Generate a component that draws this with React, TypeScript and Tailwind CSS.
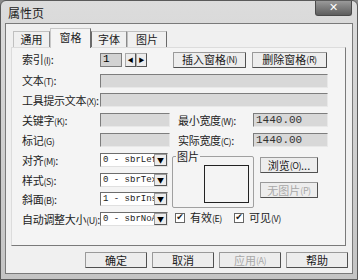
const cjk = "font-['SimSun','Noto_Sans_CJK_SC',sans-serif]";

function Key({ k }: { k: string }) {
  return <span className="text-[9px] tracking-[-0.5px]">({k})</span>;
}

function Btn({ children, w, disabled }: { children: React.ReactNode; w: string; disabled?: boolean }) {
  return (
    <div
      className={`${w} h-[16px] flex items-center justify-center rounded-[1px] border border-[#9a9a9a] border-r-[#505050] border-b-[#505050] bg-[#ededed] text-[11px] leading-none ${
        disabled ? "text-[#a8a8a8]" : "text-[#1a1a1a]"
      }`}
    >
      {children}
    </div>
  );
}

function Field({ w, value }: { w: string; value?: string }) {
  return (
    <div className={`${w} h-[14px] flex items-center border border-[#7d7d7d] border-r-[#e8e8e8] border-b-[#e8e8e8] bg-[#d8d8d8] pl-[2px] text-[11px] font-['Liberation_Mono',monospace] text-[#333]`}>
      {value}
    </div>
  );
}

function Select({ value }: { value: string }) {
  return (
    <div className="w-[68px] h-[14px] flex items-center border border-[#6d6d6d] border-r-[#e0e0e0] border-b-[#e0e0e0] bg-white">
      <span className="min-w-0 flex-1 overflow-hidden whitespace-nowrap pl-[2px] text-[9px] leading-none font-['Liberation_Mono',monospace] text-[#222]">
        {value}
      </span>
      <span className="w-[13px] h-[12px] shrink-0 flex items-center justify-center border border-[#9a9a9a] border-r-[#555] border-b-[#555] bg-[#ececec] text-[7px] text-black">
        ▼
      </span>
    </div>
  );
}

function Label({ children, w = "w-[78px]" }: { children: React.ReactNode; w?: string }) {
  return (
    <div className={`${w} shrink-0 text-[11px] leading-none tracking-[-0.3px] text-[#222] whitespace-nowrap`}>{children}</div>
  );
}

function Check({ label, k }: { label: string; k: string }) {
  return (
    <div className="flex items-center gap-[5px] text-[11px] leading-none text-[#222]">
      <span className="w-[10px] h-[10px] flex items-center justify-center border border-[#666] bg-white text-[9px] leading-none font-['DejaVu_Sans',sans-serif]">
        ✔
      </span>
      <span>
        {label}
        <Key k={k} />
      </span>
    </div>
  );
}

export default function App() {
  return (
    <div className={`w-[358px] h-[280px] overflow-hidden bg-[#8a8a8a] ${cjk}`}>
      <div className="w-[358px] h-[280px] flex flex-col rounded-t-[6px] border border-[#5a5a5a] bg-gradient-to-b from-[#dcdcdc] to-[#c4c4c4]">
        {/* title bar */}
        <div className="h-[22px] shrink-0 flex items-start justify-between pl-[7px] pr-[5px]">
          <span className="mt-[6px] text-[12px] leading-none text-[#222]">属性页</span>
          <div className="w-[37px] h-[15px] flex items-center justify-center rounded-b-[3px] border border-[#4a4a4a] border-t-0 bg-gradient-to-b from-[#9a9a9a] to-[#5e5e5e] text-[11px] font-bold text-white font-['DejaVu_Sans',sans-serif]">
            ✕
          </div>
        </div>

        {/* client */}
        <div className="mx-[4px] flex-1 mb-[5px] flex flex-col border border-[#7a7a7a] bg-[#f0f0f0]">
          {/* tabs */}
          <div className="h-[23px] shrink-0 flex items-end pl-[7px]">
            <div className="w-[37px] h-[16px] flex items-center justify-center border border-b-0 border-[#c0c0c0] border-r-[#8a8a8a] text-[11px] leading-none text-[#222]">
              通用
            </div>
            <div className="w-[41px] h-[20px] -mb-px z-10 flex items-center justify-center border border-b-0 border-[#c8c8c8] border-r-[#6a6a6a] bg-[#f4f4f4] text-[11px] leading-none text-[#222] pb-[3px]">
              窗格
            </div>
            <div className="w-[36px] h-[16px] flex items-center justify-center border border-b-0 border-l-[#6a6a6a] border-[#c0c0c0] border-r-[#8a8a8a] text-[11px] leading-none text-[#222]">
              字体
            </div>
            <div className="w-[40px] h-[16px] flex items-center justify-center border border-b-0 border-[#c0c0c0] border-r-[#6a6a6a] text-[11px] leading-none text-[#222]">
              图片
            </div>
          </div>

          {/* panel */}
          <div className="ml-[5px] mr-[6px] h-[199px] shrink-0 flex flex-col border border-[#dcdcdc] border-r-[#7a7a7a] border-b-[#7a7a7a] bg-[#f4f4f4] pl-[10px] pt-[3px]">
            <div className="h-[17px] flex items-center">
              <Label>
                索引<Key k="I" />:
              </Label>
              <div className="w-[22px] h-[14px] flex items-center border border-[#7d7d7d] bg-[#d2d2d2] pl-[2px] text-[11px] font-['Liberation_Mono',monospace] leading-none">
                1
              </div>
              <div className="ml-[3px] w-[11px] h-[14px] flex items-center justify-center border border-[#aaa] border-r-[#555] border-b-[#555] bg-[#ececec] text-[6px]">◀</div>
              <div className="w-[11px] h-[14px] flex items-center justify-center border border-[#aaa] border-r-[#555] border-b-[#555] bg-[#ececec] text-[6px]">▶</div>
              <div className="ml-[26px]">
                <Btn w="w-[73px]">
                  插入窗格 <Key k="N" />
                </Btn>
              </div>
              <div className="ml-[6px]">
                <Btn w="w-[75px]">
                  删除窗格 <Key k="R" />
                </Btn>
              </div>
            </div>

            <div className="mt-[5px] h-[15px] flex items-center">
              <Label>
                文本<Key k="T" />:
              </Label>
              <Field w="w-[228px]" />
            </div>
            <div className="mt-[5px] h-[14px] flex items-center">
              <Label>
                工具提示文本<Key k="X" />:
              </Label>
              <Field w="w-[228px]" />
            </div>
            <div className="mt-[6px] h-[14px] flex items-center">
              <Label>
                关键字<Key k="K" />:
              </Label>
              <Field w="w-[70px]" />
              <Label w="w-[75px] ml-[8px]">
                最小宽度<Key k="W" />:
              </Label>
              <Field w="w-[75px]" value="1440.00" />
            </div>
            <div className="mt-[6px] h-[14px] flex items-center">
              <Label>
                标记<Key k="G" />
              </Label>
              <Field w="w-[70px]" />
              <Label w="w-[75px] ml-[8px]">
                实际宽度<Key k="C" />:
              </Label>
              <Field w="w-[75px]" value="1440.00" />
            </div>

            <div className="mt-[4px] flex">
              <div className="flex flex-col">
                <div className="mt-[2px] h-[14px] flex items-center">
                  <Label>
                    对齐<Key k="M" />:
                  </Label>
                  <Select value="0 - sbrLeft" />
                </div>
                <div className="mt-[6px] h-[14px] flex items-center">
                  <Label>
                    样式<Key k="S" />:
                  </Label>
                  <Select value="0 - sbrText" />
                </div>
                <div className="mt-[5px] h-[14px] flex items-center">
                  <Label>
                    斜面<Key k="B" />:
                  </Label>
                  <Select value="1 - sbrInset" />
                </div>
                <div className="mt-[6px] h-[14px] flex items-center">
                  <Label>
                    自动调整大小<Key k="U" />:
                  </Label>
                  <Select value="0 - sbrNoAutoSize" />
                </div>
              </div>

              <div className="ml-[4px] flex flex-col">
                <div className="flex">
                  <fieldset className="w-[82px] h-[57px] border border-[#a0a0a0] rounded-[2px]">
                    <legend className="ml-[3px] px-[1px] text-[11px] leading-none text-[#222]">图片</legend>
                    <div className="flex justify-end pr-[4px]">
                      <div className="mt-[3px] w-[45px] h-[38px] border border-[#222] bg-[#f4f4f4]" />
                    </div>
                  </fieldset>
                  <div className="ml-[6px] mt-[6px] flex flex-col gap-[9px]">
                    <Btn w="w-[58px]">
                      浏览<Key k="O" />...
                    </Btn>
                    <Btn w="w-[58px]" disabled>
                      无图片<Key k="P" />
                    </Btn>
                  </div>
                </div>
                <div className="mt-[4px] ml-[3px] flex gap-[12px]">
                  <Check label="有效" k="E" />
                  <Check label="可见" k="V" />
                </div>
              </div>
            </div>
          </div>

          {/* footer */}
          <div className="mt-[6px] flex justify-end gap-[5px] pr-[4px]">
            <Btn w="w-[62px]">确定</Btn>
            <Btn w="w-[62px]">取消</Btn>
            <Btn w="w-[62px]" disabled>
              应用<Key k="A" />
            </Btn>
            <Btn w="w-[62px]">帮助</Btn>
          </div>
        </div>
      </div>
    </div>
  );
}
